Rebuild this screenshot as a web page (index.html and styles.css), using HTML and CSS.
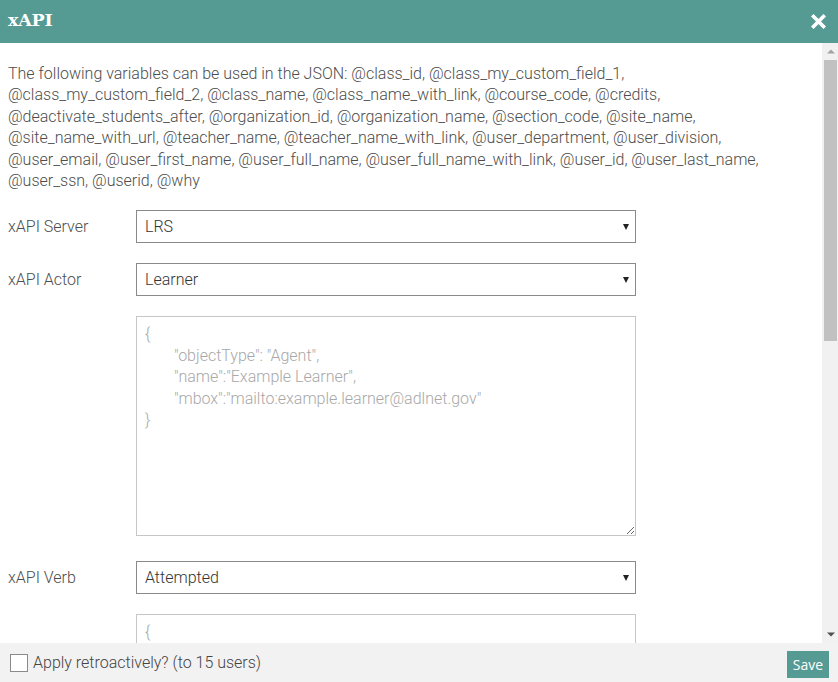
FILE: index.html
```html
<!DOCTYPE html>
<html lang="en">
<head>
<meta charset="utf-8">
<title>xAPI</title>
<link rel="stylesheet" href="styles.css">
</head>
<body>
<div class="modal">
  <header class="modal-header">
    <h1 class="modal-title">xAPI</h1>
    <button class="close-btn" aria-label="Close">
      <svg width="15" height="15" viewBox="0 0 15 15"><path d="M2.5 2.5 L12.5 12.5 M12.5 2.5 L2.5 12.5" stroke="#fff" stroke-width="3.6" stroke-linecap="square"/></svg>
    </button>
  </header>
  <div class="modal-main">
    <div class="modal-body">
      <p class="intro">The following variables can be used in the JSON: @class_id, @class_my_custom_field_1, @class_my_custom_field_2, @class_name, @class_name_with_link, @course_code, @credits, @deactivate_students_after, @organization_id, @organization_name, @section_code, @site_name, @site_name_with_url, @teacher_name, @teacher_name_with_link, @user_department, @user_division, @user_email, @user_first_name, @user_full_name, @user_full_name_with_link, @user_id, @user_last_name, @user_ssn, @userid, @why</p>

      <div class="form-row">
        <label class="form-label">xAPI Server</label>
        <span class="select-wrap"><select class="form-select"><option>LRS</option></select></span>
      </div>
      <div class="form-row">
        <label class="form-label">xAPI Actor</label>
        <span class="select-wrap"><select class="form-select"><option>Learner</option></select></span>
      </div>
      <div class="form-row">
        <span class="form-label"></span>
        <textarea class="form-text" placeholder="{&#10;&#9;&quot;objectType&quot;: &quot;Agent&quot;,&#10;&#9;&quot;name&quot;:&quot;Example Learner&quot;,&#10;&#9;&quot;mbox&quot;:&quot;mailto:example.learner@adlnet.gov&quot;&#10;}"></textarea>
      </div>
      <div class="form-row">
        <label class="form-label">xAPI Verb</label>
        <span class="select-wrap"><select class="form-select"><option>Attempted</option></select></span>
      </div>
      <div class="form-row">
        <span class="form-label"></span>
        <textarea class="form-text" placeholder="{"></textarea>
      </div>
    </div>
    <div class="scrollbar" aria-hidden="true">
      <div class="scroll-btn">
        <svg width="8" height="5" viewBox="0 0 8 5"><path d="M0 4.5 L4 0.5 L8 4.5 Z" fill="#a3a3a3"/></svg>
      </div>
      <div class="scroll-track"><div class="scroll-thumb"></div></div>
      <div class="scroll-btn">
        <svg width="8" height="5" viewBox="0 0 8 5"><path d="M0 0.5 L8 0.5 L4 4.5 Z" fill="#505050"/></svg>
      </div>
    </div>
  </div>
  <footer class="modal-footer">
    <label class="check">
      <input type="checkbox" class="check-box">
      <span>Apply retroactively? (to 15 users)</span>
    </label>
    <button class="save-btn">Save</button>
  </footer>
</div>
</body>
</html>
```
FILE: styles.css
```css
* { box-sizing: border-box; }
html, body { margin: 0; padding: 0; }
body {
  font-family: Roboto, "Liberation Sans", Arial, sans-serif;
  font-weight: 300;
  font-size: 16px;
  line-height: 21.4px;
  color: #4d4d4d;
  background: #fff;
}
.modal {
  width: 838px;
  height: 682px;
  display: flex;
  flex-direction: column;
  overflow: hidden;
}
.modal-header {
  height: 43px;
  flex: 0 0 43px;
  background: #559a93;
  display: flex;
  align-items: center;
  justify-content: space-between;
  padding: 0 12px 1px 8px;
}
.modal-title {
  margin: 0;
  font-family: "DejaVu Serif", "Liberation Serif", serif;
  font-weight: bold;
  font-size: 17.5px;
  color: #fff;
  letter-spacing: -0.2px;
}
.close-btn {
  border: 0;
  background: none;
  padding: 0;
  width: 15px;
  height: 15px;
  display: flex;
  cursor: pointer;
}
.modal-main {
  flex: 1 1 auto;
  display: flex;
  min-height: 0;
}
.modal-body {
  flex: 1 1 auto;
  overflow: hidden;
  padding: 20px 20px 0 8px;
}
.scrollbar {
  flex: 0 0 16px;
  width: 16px;
  background: #f1f1f1;
  display: flex;
  flex-direction: column;
}
.scroll-btn {
  flex: 0 0 17px;
  height: 17px;
  display: flex;
  align-items: center;
  justify-content: center;
  padding-left: 1px;
}
.scroll-track {
  flex: 1 1 auto;
  padding: 0 1px 0 2px;
}
.scroll-thumb {
  height: 281px;
  background: #c1c1c1;
}
.intro {
  margin: 0 0 19px 0;
}
.form-row {
  display: flex;
  align-items: center;
  margin-bottom: 20px;
}
.form-label {
  width: 128px;
  flex: 0 0 128px;
}
.select-wrap {
  position: relative;
  display: block;
  width: 500px;
}
.select-wrap::after {
  content: "";
  position: absolute;
  right: 7px;
  top: 14px;
  border-left: 3.5px solid transparent;
  border-right: 3.5px solid transparent;
  border-top: 6px solid #222;
  pointer-events: none;
}
.form-select {
  appearance: none;
  -webkit-appearance: none;
  width: 500px;
  height: 33px;
  border: 1px solid #8a8a8a;
  border-radius: 0;
  background: #fff;
  font-family: inherit;
  font-weight: 300;
  font-size: 16px;
  color: #333;
  padding: 0 24px 0 8px;
  margin: 0;
}
.form-text {
  width: 500px;
  height: 220px;
  border: 1px solid #c6c6c6;
  border-radius: 0;
  font-family: inherit;
  font-weight: 300;
  font-size: 16px;
  line-height: 21.4px;
  padding: 6px 8px;
  margin: 0 0 5px 0;
  color: #444;
  resize: vertical;
  tab-size: 29px;
}
.form-text::placeholder { color: #a8a8a8; opacity: 1; }
.modal-footer {
  flex: 0 0 39px;
  height: 39px;
  background: #f2f2f2;
  display: flex;
  align-items: center;
  justify-content: space-between;
  padding: 0 9px 0 10px;
}
.check {
  display: flex;
  align-items: center;
  gap: 5px;
  font-size: 16px;
  color: #444;
}
.check-box {
  appearance: none;
  -webkit-appearance: none;
  width: 18px;
  height: 18px;
  margin: 0;
  border: 1px solid #8a8a8a;
  background: #fff;
}
.save-btn {
  border: 0;
  background: #559a93;
  color: #fff;
  font-family: "Open Sans", "DejaVu Sans", sans-serif;
  font-weight: 400;
  font-size: 14px;
  height: 27px;
  width: 42px;
  padding: 0;
  margin-top: 3px;
}
```
